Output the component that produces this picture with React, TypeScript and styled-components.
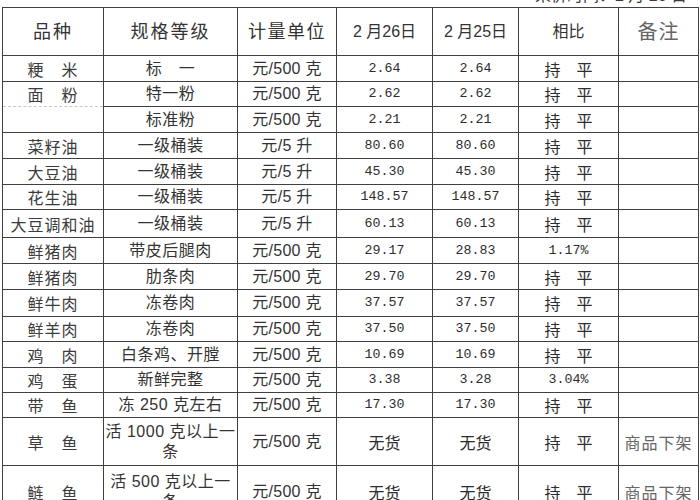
import React from "react";
import styled, { createGlobalStyle } from "styled-components";

const Global = createGlobalStyle`
  html, body { margin: 0; padding: 0; background: #ffffff; }
  body { font-family: "Noto Sans CJK SC", "Noto Sans", sans-serif; color: #333; }
`;

const Page = styled.div`
  width: 700px;
  height: 500px;
  overflow: hidden;
  padding-left: 2px;
  box-sizing: border-box;
`;

const Caption = styled.div`
  height: 7px;
  overflow: hidden;
  display: flex;
  align-items: flex-end;
  padding-left: 533px;
  white-space: nowrap;
`;

const CaptionText = styled.span`
  font-size: 16px;
  line-height: 16px;
  margin-bottom: 3px;
  color: #3a3a3a;
  font-family: "Liberation Sans", "Noto Sans CJK SC", sans-serif;
`;

const Table = styled.table`
  border-collapse: collapse;
  table-layout: fixed;
  width: 697px;
`;

const Tr = styled.tr<{ $h: number }>`
  height: ${(p) => p.$h}px;
`;

const Cell = styled.td`
  border: 1px solid #404040;
  padding: 0;
  text-align: center;
  vertical-align: middle;
  white-space: nowrap;
  color: #333;
  line-height: 20px;
`;

const HeadCell = styled(Cell).attrs({ as: "th" })<{ $size: number; $ls?: number; $tone?: string }>`
  font-weight: normal;
  font-size: ${(p) => p.$size}px;
  letter-spacing: ${(p) => p.$ls ?? 0}px;
  color: ${(p) => p.$tone ?? "#333"};
  font-family: "Liberation Sans", "Noto Sans CJK SC", sans-serif;
`;

const NameCell = styled(Cell)<{ $dashBottom?: boolean; $dashTop?: boolean }>`
  font-size: 16px;
  letter-spacing: 1px;
  color: #3c3c3c;
  ${(p) => (p.$dashBottom ? "border-bottom: 1px dashed #c8c8c8;" : "")}
  ${(p) => (p.$dashTop ? "border-top: 1px dashed #c8c8c8;" : "")}
`;

const SpecCell = styled(Cell)`
  font-size: 16px;
  letter-spacing: 0.5px;
  font-family: "Liberation Sans", "Noto Sans CJK SC", sans-serif;
`;

const UnitCell = styled(Cell)`
  font-size: 16px;
  letter-spacing: 0.3px;
  font-family: "Liberation Sans", "Noto Sans CJK SC", sans-serif;
`;

const NumCell = styled(Cell)`
  font-size: 13.3px;
  font-family: "Liberation Mono", "Noto Sans CJK SC", monospace;
  color: #2c2c2c;
`;

const CmpCell = styled(Cell)<{ $mono?: boolean }>`
  font-size: ${(p) => (p.$mono ? "13.3px" : "16px")};
  font-family: ${(p) =>
    p.$mono ? `"Liberation Mono", monospace` : `"Noto Sans CJK SC", sans-serif`};
  color: #2c2c2c;
`;

const NoteCell = styled(Cell)`
  font-size: 16px;
  letter-spacing: 1px;
  color: #666;
`;

type Row = {
  name: string;
  spec: React.ReactNode;
  unit: string;
  d26: string;
  d25: string;
  cmp: string;
  note?: string;
  h: number;
  dashBottom?: boolean;
  dashTop?: boolean;
};

const FLAT = "持　平";

const rows: Row[] = [
  { name: "粳　米", spec: "标　一", unit: "元/500 克", d26: "2.64", d25: "2.64", cmp: FLAT, h: 26 },
  { name: "面　粉", spec: "特一粉", unit: "元/500 克", d26: "2.62", d25: "2.62", cmp: FLAT, h: 25, dashBottom: true },
  { name: "", spec: "标准粉", unit: "元/500 克", d26: "2.21", d25: "2.21", cmp: FLAT, h: 26, dashTop: true },
  { name: "菜籽油", spec: "一级桶装", unit: "元/5 升", d26: "80.60", d25: "80.60", cmp: FLAT, h: 26 },
  { name: "大豆油", spec: "一级桶装", unit: "元/5 升", d26: "45.30", d25: "45.30", cmp: FLAT, h: 26 },
  { name: "花生油", spec: "一级桶装", unit: "元/5 升", d26: "148.57", d25: "148.57", cmp: FLAT, h: 25 },
  { name: "大豆调和油", spec: "一级桶装", unit: "元/5 升", d26: "60.13", d25: "60.13", cmp: FLAT, h: 28 },
  { name: "鲜猪肉", spec: "带皮后腿肉", unit: "元/500 克", d26: "29.17", d25: "28.83", cmp: "1.17%", h: 26 },
  { name: "鲜猪肉", spec: "肋条肉", unit: "元/500 克", d26: "29.70", d25: "29.70", cmp: FLAT, h: 26 },
  { name: "鲜牛肉", spec: "冻卷肉", unit: "元/500 克", d26: "37.57", d25: "37.57", cmp: FLAT, h: 27 },
  { name: "鲜羊肉", spec: "冻卷肉", unit: "元/500 克", d26: "37.50", d25: "37.50", cmp: FLAT, h: 25 },
  { name: "鸡　肉", spec: "白条鸡、开膛", unit: "元/500 克", d26: "10.69", d25: "10.69", cmp: FLAT, h: 26 },
  { name: "鸡　蛋", spec: "新鲜完整", unit: "元/500 克", d26: "3.38", d25: "3.28", cmp: "3.04%", h: 25 },
  { name: "带　鱼", spec: "冻 250 克左右", unit: "元/500 克", d26: "17.30", d25: "17.30", cmp: FLAT, h: 25 },
  {
    name: "草　鱼",
    spec: (
      <>
        活 1000 克以上一
        <br />条
      </>
    ),
    unit: "元/500 克",
    d26: "无货",
    d25: "无货",
    cmp: FLAT,
    note: "商品下架",
    h: 48,
  },
  {
    name: "鲢　鱼",
    spec: (
      <>
        活 500 克以上一
        <br />条
      </>
    ),
    unit: "元/500 克",
    d26: "无货",
    d25: "无货",
    cmp: FLAT,
    note: "商品下架",
    h: 52,
  },
];

const widths = [101, 134, 99, 96, 86, 100, 80];

const isNum = (s: string) => /^[0-9.%]+$/.test(s);

export default function App() {
  return (
    <>
      <Global />
      <Page>
        <Caption>
          <CaptionText>采价时间：2 月 26 日</CaptionText>
        </Caption>
        <Table>
          <colgroup>
            {widths.map((w, i) => (
              <col key={i} style={{ width: w }} />
            ))}
          </colgroup>
          <thead>
            <Tr $h={48}>
              <HeadCell $size={18} $ls={2}>品种</HeadCell>
              <HeadCell $size={18} $ls={2}>规格等级</HeadCell>
              <HeadCell $size={18} $ls={1.5}>计量单位</HeadCell>
              <HeadCell $size={16}>2 月26日</HeadCell>
              <HeadCell $size={16}>2 月25日</HeadCell>
              <HeadCell $size={16}>相比</HeadCell>
              <HeadCell $size={20} $ls={1} $tone="#666">备注</HeadCell>
            </Tr>
          </thead>
          <tbody>
            {rows.map((r, i) => (
              <Tr key={i} $h={r.h}>
                <NameCell $dashBottom={r.dashBottom} $dashTop={r.dashTop}>
                  {r.name}
                </NameCell>
                <SpecCell>{r.spec}</SpecCell>
                <UnitCell>{r.unit}</UnitCell>
                {isNum(r.d26) ? <NumCell>{r.d26}</NumCell> : <CmpCell>{r.d26}</CmpCell>}
                {isNum(r.d25) ? <NumCell>{r.d25}</NumCell> : <CmpCell>{r.d25}</CmpCell>}
                <CmpCell $mono={isNum(r.cmp)}>{r.cmp}</CmpCell>
                <NoteCell>{r.note ?? ""}</NoteCell>
              </Tr>
            ))}
          </tbody>
        </Table>
      </Page>
    </>
  );
}
